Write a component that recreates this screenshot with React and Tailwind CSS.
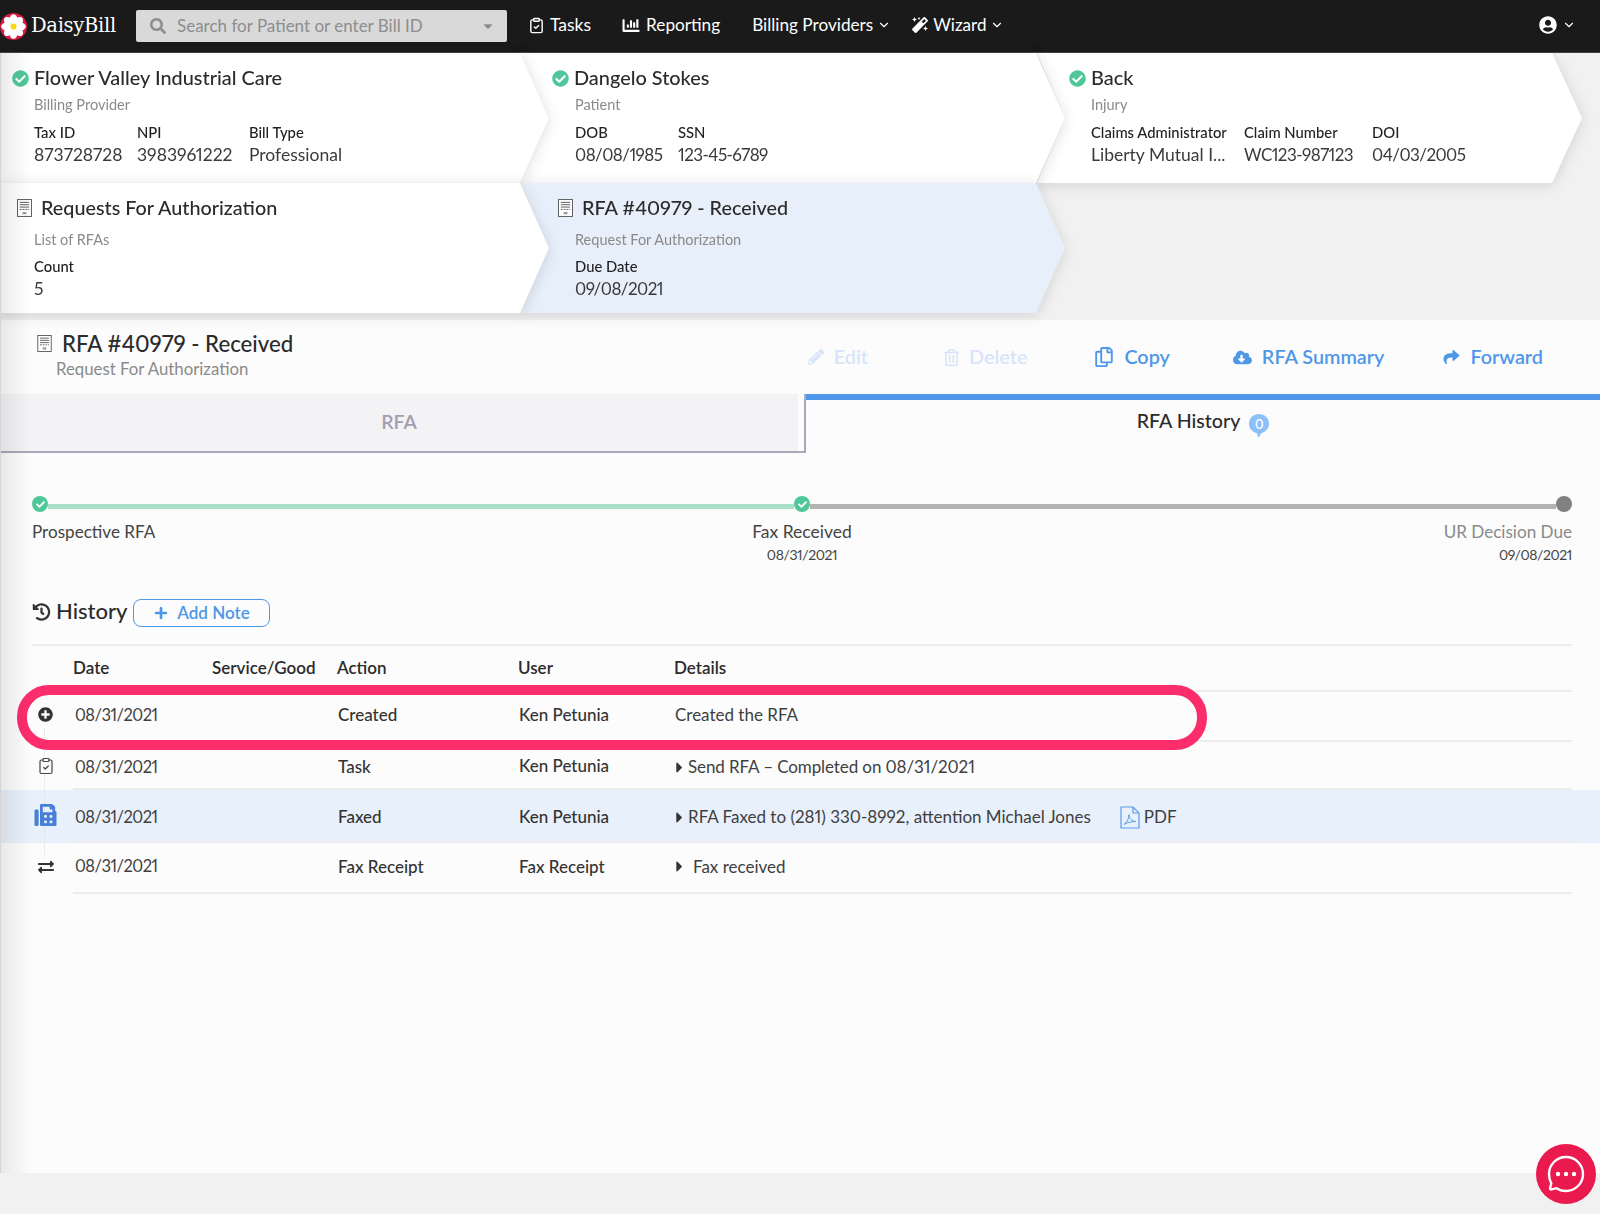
import React from "react";
import {
  FaCheckCircle, FaPencilAlt, FaRegTrashAlt, FaRegCopy, FaCloudDownloadAlt, FaShare,
  FaHistory, FaPlus, FaPlusCircle, FaExchangeAlt, FaFax, FaCaretRight,
  FaCaretDown, FaSearch, FaChartBar, FaMagic, FaUserCircle, FaCheck,
} from "react-icons/fa";
import { ChevronDown, ClipboardCheck } from "lucide-react";

function Flower() {
  const petals = [0, 45, 90, 135, 180, 225, 270, 315];
  return (
    <svg width="27" height="27" viewBox="0 0 27 27">
      <circle cx="13.5" cy="13.5" r="13.5" fill="#d81b44" />
      {petals.map((a) => (
        <ellipse key={a} cx="13.5" cy="6.8" rx="4" ry="5.6" fill="#fff" transform={`rotate(${a} 13.5 13.5)`} />
      ))}
      <circle cx="13.5" cy="13.5" r="3" fill="#f4d90f" />
    </svg>
  );
}

function FormIcon({ className }) {
  return (
    <svg className={className} viewBox="0 0 16 19" fill="none" stroke="#555" strokeWidth="1">
      <rect x="0.5" y="0.5" width="15" height="18" fill="#fff" />
      <path d="M3 3.5h10M3 6h10M3 8.5h10" />
      <path d="M3 11h10" strokeDasharray="2 1" />
      <path d="M6 15h4" strokeWidth="2.5" stroke="#999" />
    </svg>
  );
}

function PdfIcon({ className }) {
  return (
    <svg className={className} viewBox="0 0 20 23" fill="none" stroke="#5b9be8" strokeWidth="1.2">
      <path d="M1 1h12l6 6v15H1z" />
      <path d="M13 1v6h6" />
      <path d="M4 18.500c3-2 5-6 5-10 0 4 3 7 7 7-4 0-9 1-12 3z" strokeWidth="1" />
    </svg>
  );
}

function Field({ label, value, className, tight }) {
  return (
    <div className={className}>
      <div className="text-[14.8px] leading-[20px] font-medium text-[#222] whitespace-nowrap">{label}</div>
      <div className={`mt-[1px] leading-[24px] text-[#3a3a3a] whitespace-nowrap ${tight ? "text-[17px] tracking-[-0.55px]" : "text-[17.5px]"}`}>{value}</div>
    </div>
  );
}

function CheckTitle({ children }) {
  return (
    <div className="flex items-center h-[24px]">
      <FaCheckCircle className="w-[17px] h-[17px] text-[#4fc79a] shrink-0" />
      <span className="ml-[5px] text-[19.9px] font-medium text-[#2b2b2b] whitespace-nowrap">{children}</span>
    </div>
  );
}

function FormTitle({ children }) {
  return (
    <div className="flex items-center h-[24px]">
      <FormIcon className="w-[15px] h-[18px] shrink-0" />
      <span className="ml-[9px] text-[19.8px] font-medium text-[#2b2b2b] whitespace-nowrap">{children}</span>
    </div>
  );
}

function TopBar() {
  return (
    <div className="h-[53px] bg-[#1a1a1a] flex items-center text-white border-b border-[#444]">
      <Flower />
      <span className="ml-[4px] w-[105px] text-[19.5px] font-['DejaVu_Serif',serif] tracking-[-0.3px]">DaisyBill</span>
      <div className="w-[371px] h-[32px] rounded-[2px] bg-[#d9d9d9] flex items-center pl-[14px] pr-[12px] text-[#8d8d8d]">
        <FaSearch className="w-[16px] h-[16px]" />
        <span className="ml-[11px] text-[17px] flex-1">Search for Patient or enter Bill ID</span>
        <FaCaretDown className="w-[14px] h-[14px]" />
      </div>
      <div className="flex items-center pb-[2px]">
        <ClipboardCheck className="ml-[21px] w-[17px] h-[17px]" />
        <span className="ml-[5px] text-[17.5px]">Tasks</span>
        <FaChartBar className="ml-[30px] w-[20px] h-[17px]" />
        <span className="ml-[5px] text-[17.2px]">Reporting</span>
        <span className="ml-[32px] text-[17.2px]">Billing Providers</span>
        <ChevronDown className="ml-[4px] w-[14px] h-[14px]" />
        <FaMagic className="ml-[21px] w-[16px] h-[16px]" />
        <span className="ml-[5px] text-[17px]">Wizard</span>
        <ChevronDown className="ml-[4px] w-[14px] h-[14px]" />
      </div>
      <FaUserCircle className="ml-auto w-[18px] h-[18px] mb-[2px]" />
      <ChevronDown className="ml-[5px] mr-[24px] w-[14px] h-[14px] mb-[2px]" />
    </div>
  );
}

function Crumbs() {
  const shadow = "[filter:drop-shadow(0_2px_7px_rgba(0,0,0,0.13))]";
  return (
    <div>
      <div className="relative z-10 flex h-[130px]">
        <div className={`relative z-30 w-[549px] ${shadow}`}>
          <div className="h-full bg-white pt-[13px] pl-[12px] [clip-path:polygon(0_0,520px_0,100%_50%,520px_100%,0_100%)]">
            <CheckTitle>Flower Valley Industrial Care</CheckTitle>
            <div className="pl-[22px]">
              <div className="mt-[5px] text-[14.5px] leading-[20px] text-[#8a8a8a]">Billing Provider</div>
              <div className="mt-[7px] flex gap-[17px]">
                <Field label="Tax ID" value="873728728" className="w-[86px]" />
                <Field label="NPI" value="3983961222" className="w-[95px]" />
                <Field label="Bill Type" value="Professional" />
              </div>
            </div>
          </div>
        </div>
        <div className={`relative z-20 -ml-[29px] w-[545px] ${shadow}`}>
          <div className="h-full bg-white pt-[13px] pl-[32px] [clip-path:polygon(0_0,516px_0,100%_50%,516px_100%,0_100%,29px_50%)]">
            <CheckTitle>Dangelo Stokes</CheckTitle>
            <div className="pl-[23px]">
              <div className="mt-[5px] text-[14.5px] leading-[20px] text-[#8a8a8a]">Patient</div>
              <div className="mt-[7px] flex gap-[17px]">
                <Field label="DOB" value="08/08/1985" className="w-[86px]" tight />
                <Field label="SSN" value="123-45-6789" tight />
              </div>
            </div>
          </div>
        </div>
        <div className={`relative z-10 -ml-[28px] w-[545px] ${shadow}`}>
          <div className="h-full bg-white pt-[13px] pl-[32px] [clip-path:polygon(0_0,515px_0,100%_50%,515px_100%,0_100%,28px_50%)]">
            <CheckTitle>Back</CheckTitle>
            <div className="pl-[22px]">
              <div className="mt-[5px] text-[14.5px] leading-[20px] text-[#8a8a8a]">Injury</div>
              <div className="mt-[7px] flex gap-[17px]">
                <Field label="Claims Administrator" value="Liberty Mutual I..." className="w-[136px]" />
                <Field label="Claim Number" value="WC123-987123" className="w-[111px]" tight />
                <Field label="DOI" value="04/03/2005" tight />
              </div>
            </div>
          </div>
        </div>
      </div>
      <div className="flex h-[130px]">
        <div className={`relative z-30 w-[549px] ${shadow}`}>
          <div className="h-full bg-white pt-[13px] pl-[17px] [clip-path:polygon(0_0,520px_0,100%_50%,520px_100%,0_100%)]">
            <FormTitle>Requests For Authorization</FormTitle>
            <div className="pl-[17px]">
              <div className="mt-[10px] text-[14.5px] leading-[20px] text-[#8a8a8a]">List of RFAs</div>
              <div className="mt-[6px]">
                <Field label="Count" value="5" />
              </div>
            </div>
          </div>
        </div>
        <div className={`relative z-20 -ml-[29px] w-[545px] ${shadow}`}>
          <div className="h-full bg-[#e7effa] pt-[13px] pl-[38px] [clip-path:polygon(0_0,516px_0,100%_50%,516px_100%,0_100%,29px_50%)]">
            <FormTitle>RFA #40979 - Received</FormTitle>
            <div className="-ml-[6px] pl-[23px]">
              <div className="mt-[10px] text-[14.5px] leading-[20px] text-[#8a8a8a]">Request For Authorization</div>
              <div className="mt-[6px]">
                <Field label="Due Date" value="09/08/2021" tight />
              </div>
            </div>
          </div>
        </div>
      </div>
    </div>
  );
}

function Action({ icon, label, muted, className }) {
  return (
    <div className={`flex items-center gap-[10px] text-[19.8px] font-semibold ${muted ? "text-[#d6e5f9]" : "text-[#4f97e8]"} ${className}`}>
      {icon}
      <span>{label}</span>
    </div>
  );
}

function Dot({ className }) {
  return (
    <div className={`w-[16px] h-[16px] rounded-full shrink-0 flex items-center justify-center ${className}`}>
      <FaCheck className="w-[9px] h-[9px] text-white" />
    </div>
  );
}

function Caret() {
  return <FaCaretRight className="w-[9px] h-[17px] text-[#333] shrink-0" />;
}

function TableRow({ icon, date, action, user, children, height, gridClass = "", iconClass = "", userClass = "" }) {
  return (
    <div className={`relative flex items-stretch ${height}`}>
      <div className={`relative z-10 w-[41px] shrink-0 flex items-center justify-center pr-[14px] ${iconClass}`}>{icon}</div>
      <div className={`flex-1 grid grid-cols-[139px_125px_181px_1fr] items-center pl-[1px] text-[17px] text-[#3f3f3f] border-b-2 border-[#ececec] ${gridClass}`}>
        <div className="pl-[1px] text-[16.5px] tracking-[-0.5px]">{date}</div>
        <div />
        <div>
          <span className="font-medium text-[#333]">{action}</span>
        </div>
        <div className="flex items-center">
          <div className={`w-[156px] shrink-0 font-medium text-[#333] ${userClass}`}>{user}</div>
          {children}
        </div>
      </div>
    </div>
  );
}

function History() {
  return (
    <div className="relative mt-[18px] border-t-2 border-[#ececec]">
      <div className="grid grid-cols-[41px_139px_125px_181px_156px_1fr] items-center h-[44px] text-[17px] font-semibold text-[#2b2b2b]">
        <div />
        <div>Date</div>
        <div>Service/Good</div>
        <div>Action</div>
        <div>User</div>
        <div>Details</div>
      </div>
      <div className="border-t-2 border-[#ececec] ml-[41px]" />
      <div className="absolute left-[12px] top-[82px] h-[130px] border-l border-dotted border-[#dedede]" />
      <TableRow
        height="h-[50px]"
        gridClass="pb-[2px]"
        iconClass="pb-[6px]"
        icon={<FaPlusCircle className="w-[15px] h-[15px] text-[#333]" />}
        date="08/31/2021"
        action="Created"
        user="Ken Petunia"
      >
        <span>Created the RFA</span>
      </TableRow>
      <TableRow
        height="h-[48px]"
        gridClass="pt-[4px]"
        userClass="pb-[2px]"
        icon={<ClipboardCheck className="w-[18px] h-[18px] text-[#444] bg-[#fcfcfc]" strokeWidth={1.6} />}
        date="08/31/2021"
        action="Task"
        user="Ken Petunia"
      >
        <Caret />
        <span className="ml-[4px] tracking-[-0.1px]">Send RFA – Completed on 08/31/2021</span>
      </TableRow>
      <div className="-ml-[32px] -mr-[28px] pl-[32px] pr-[28px] bg-[#e8f0fb]">
        <TableRow
          height="h-[53px]"
          gridClass="pt-[3px]"
          iconClass="pb-[4px]"
          icon={<FaFax className="w-[23px] h-[22px] text-[#4a7fd8]" />}
          date="08/31/2021"
          action="Faxed"
          user="Ken Petunia"
        >
          <Caret />
          <span className="ml-[4px] whitespace-nowrap">RFA Faxed to (281) 330-8992, attention Michael Jones</span>
          <PdfIcon className="ml-[29px] w-[20px] h-[23px] shrink-0" />
          <span className="ml-[4px]">PDF</span>
        </TableRow>
      </div>
      <TableRow
        height="h-[51px]"
        gridClass="pb-[2px]"
        iconClass="pb-[4px]"
        icon={<FaExchangeAlt className="w-[20px] h-[16px] text-[#333] bg-[#fcfcfc]" />}
        date="08/31/2021"
        action="Fax Receipt"
        user="Fax Receipt"
      >
        <Caret />
        <span className="ml-[9px]">Fax received</span>
      </TableRow>
      {/* pink highlight drawn on top of the first row */}
      <div className="absolute -left-[15px] top-[39px] w-[1190px] h-[65px] rounded-[32px] border-[10px] border-[#fb2d6b] pointer-events-none" />
    </div>
  );
}

function Panel() {
  return (
    <div className="mt-[7px] h-[853px] bg-[#fcfcfc]">
      <div className="h-[74px] flex items-center">
        <div className="pl-[37px] pb-[3px]">
          <div className="flex items-center h-[26px]">
            <FormIcon className="w-[15px] h-[17px]" />
            <span className="ml-[10px] text-[22.2px] font-medium text-[#2b2b2b]">RFA #40979 - Received</span>
          </div>
          <div className="ml-[19px] h-[24px] leading-[24px] text-[16.8px] text-[#8a8a8a]">Request For Authorization</div>
        </div>
        <div className="ml-auto flex items-center pr-[57px]">
          <Action muted label="Edit" icon={<FaPencilAlt className="w-[16px] h-[16px]" />} />
          <Action muted label="Delete" className="ml-[76px]" icon={<FaRegTrashAlt className="w-[15px] h-[17px]" />} />
          <Action label="Copy" className="ml-[67px]" icon={<FaRegCopy className="w-[20px] h-[20px]" />} />
          <Action label="RFA Summary" className="ml-[63px]" icon={<FaCloudDownloadAlt className="w-[19px] h-[17px]" />} />
          <Action label="Forward" className="ml-[59px]" icon={<FaShare className="w-[17px] h-[16px]" />} />
        </div>
      </div>

      <div className="flex h-[59px]">
        <div className="w-[806px] shrink-0 border-b-2 border-r-2 border-[#a9a9bb] pr-[6px]">
          <div className="h-full bg-[#f3f3f6] flex items-center justify-center pb-[1px] text-[19.5px] font-semibold text-[#a0a0b0]">RFA</div>
        </div>
        <div className="flex-1 border-t-[6px] border-[#4f97e8] flex items-center justify-center pb-[12px]">
          <span className="text-[19.6px] font-medium text-[#2b2b2b]">RFA History</span>
          <div className="relative ml-[9px] mt-[10px] w-[20px] h-[24px]">
            <svg width="20" height="24" viewBox="0 0 20 24">
              <path d="M10 0c5.500 0 10 4 10 9.500 0 5.500-4 8.500-8 10L9.500 24 8 19.200C3.500 18 0 15 0 9.500 0 4 4.500 0 10 0z" fill="#8cc0fb" />
            </svg>
            <span className="absolute left-0 top-[1px] w-[20px] text-center text-[13px] font-semibold text-white">0</span>
          </div>
        </div>
      </div>

      <div className="pl-[32px] pr-[28px]">
        <div className="pt-[43px] flex items-center">
          <Dot className="bg-[#4fc79a]" />
          <div className="flex-1 h-[5px] mt-[4px] bg-[#a9e0c9]" />
          <Dot className="bg-[#4fc79a]" />
          <div className="flex-1 h-[5px] mt-[4px] bg-[#b3b3b3]" />
          <div className="w-[16px] h-[16px] rounded-full bg-[#808080] shrink-0" />
        </div>
        <div className="mt-[8px] grid grid-cols-3 text-[17.1px] leading-[24px] text-[#444]">
          <div>Prospective RFA</div>
          <div className="text-center text-[17.5px]">
            Fax Received
            <div className="mt-[1px] text-[14px] leading-[20px] tracking-[-0.4px]">08/31/2021</div>
          </div>
          <div className="text-right text-[#8a8a8a]">
            UR Decision Due
            <div className="mt-[1px] text-[14px] leading-[20px] tracking-[-0.4px] text-[#444]">09/08/2021</div>
          </div>
        </div>

        <div className="mt-[33px] flex items-center h-[28px]">
          <FaHistory className="w-[19px] h-[18px] text-[#333]" />
          <span className="ml-[5px] pb-[4px] text-[22px] font-medium text-[#2b2b2b]">History</span>
          <button className="ml-[6px] mt-[1px] w-[137px] h-[28px] rounded-[8px] border-[1.5px] border-[#4f97e8] flex items-center justify-center gap-[9px] text-[17px] font-semibold text-[#4f97e8]">
            <FaPlus className="w-[14px] h-[14px]" />
            Add Note
          </button>
        </div>

        <History />
      </div>
    </div>
  );
}

export default function App() {
  return (
    <div className="relative w-full h-[1214px] overflow-hidden bg-[#f1f1f1] font-['Lato',sans-serif] proportional-nums">
      <TopBar />
      <Crumbs />
      <Panel />
      {/* left edge shading */}
      <div className="absolute left-0 top-[53px] w-[30px] h-[1120px] z-40 bg-gradient-to-r from-[#00000014] to-transparent border-l border-[#d5d5d5] pointer-events-none" />
      <div className="absolute left-[1536px] top-[1144px] z-50 w-[60px] h-[60px] rounded-full bg-[#ea1a4f] flex items-center justify-center">
        <svg width="40" height="40" viewBox="0 0 40 40" fill="none" stroke="#fff" strokeWidth="2.4">
          <path d="M3 20a17 17 0 1 1 17 17c-3.500 0-7-1-9.500-2.800l-5 1.200c-1 .2-1.700-.5-1.400-1.400l1.200-4.600C3.800 26.500 3 23.300 3 20z" />
          <circle cx="12" cy="20" r="2.200" fill="#fff" stroke="none" />
          <circle cx="20" cy="20" r="2.200" fill="#fff" stroke="none" />
          <circle cx="28" cy="20" r="2.200" fill="#fff" stroke="none" />
        </svg>
      </div>
    </div>
  );
}
